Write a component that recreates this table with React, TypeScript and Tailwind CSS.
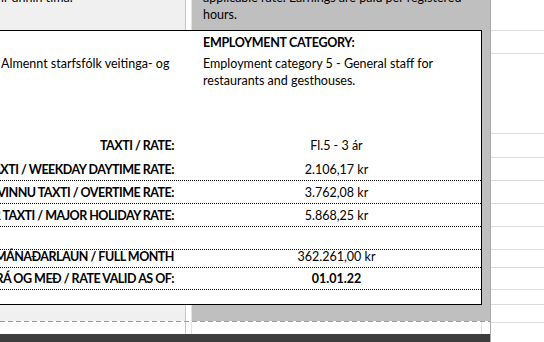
const rateRows = [
  { label: 'DAGVINNUTAXTI / WEEKDAY DAYTIME RATE:', value: '2.106,17 kr', h: 'h-[24px]' },
  { label: 'YFIRVINNU TAXTI / OVERTIME RATE:', value: '3.762,08 kr', h: 'h-[23px]' },
  { label: 'STÓRHÁTÍÐAR TAXTI / MAJOR HOLIDAY RATE:', value: '5.868,25 kr', h: 'h-[23px]' },
  { label: '', value: '', h: 'h-[23px]' },
  { label: 'MÁNAÐARLAUN / FULL MONTH', value: '362.261,00 kr', h: 'h-[18px]' },
  { label: 'GILDIR FRÁ OG MEÐ / RATE VALID AS OF:', value: '01.01.22', h: 'h-[22px]', bold: true },
];

const gridRows = ['h-[31px]', 'h-[23px]', 'h-[80px]', 'h-[24px]', 'h-[23px]', 'h-[23px]', 'h-[23px]', 'h-[23px]', 'h-[18px]', 'h-[22px]', 'h-[15px]', 'h-[18px]'];

export default function App() {
  return (
    <div className="flex h-[342px] w-[544px] overflow-hidden bg-white font-['Lato','Noto_Sans',sans-serif] text-[12.5px] leading-[17px] text-black">
      {/* sheet area */}
      <div className="flex w-[491px] flex-col border-r border-[#a9a9a9]">
        {/* row above the box */}
        <div className="flex h-[30px]">
          <div className="w-[186px] border-r border-[#c6c6c6] bg-[#f0f0f0] pl-px">
            <p className="-mt-[11px]">ir unnin tíma.</p>
          </div>
          <div className="w-[6px] border-r border-[#e2e2e2] bg-white" />
          <div className="flex-1 bg-[#bfbfbf] pl-[11px]">
            <p className="-mt-[11px] whitespace-nowrap">applicable rate. Earnings are paid per registered</p>
            <p>hours.</p>
          </div>
        </div>

        {/* bordered box */}
        <div className="flex h-[275px]">
          <div className="flex w-[482px] flex-col border-y border-r border-black bg-white">
            <div className="flex h-[22px] items-end pb-[2px]">
              <div className="w-[192px]" />
              <p className="pl-[11px] font-bold tracking-[-0.3px]">EMPLOYMENT CATEGORY:</p>
            </div>
            <div className="flex h-[80px] pt-[2px]">
              <p className="w-[192px] whitespace-nowrap pl-px">Almennt starfsfólk veitinga- og</p>
              <div className="pl-[11px]">
                <p>Employment category 5 - General staff for</p>
                <p>restaurants and gesthouses.</p>
              </div>
            </div>
            <div className="flex h-[24px] items-end pb-[3px]">
              <div className="flex w-[192px] justify-end pr-[18px] font-bold tracking-[-0.5px]">
                <span className="whitespace-nowrap">TAXTI / RATE:</span>
              </div>
              <p className="flex-1 text-center">Fl.5 - 3 ár</p>
            </div>
            {rateRows.map((row, i) => (
              <div key={i} className={`flex items-end border-b border-dotted border-black pb-[2px] ${row.h}`}>
                <div className="flex w-[192px] shrink-0 justify-end pr-[18px] font-bold tracking-[-0.5px]">
                  <span className="shrink-0 whitespace-nowrap">{row.label}</span>
                </div>
                <p className={`flex-1 text-center ${row.bold ? 'font-bold' : ''}`}>{row.value}</p>
              </div>
            ))}
            <div className="flex-1" />
          </div>
          <div className="flex-1 bg-[#bfbfbf]" />
        </div>

        {/* row below the box */}
        <div className="flex h-[16px]">
          <div className="w-[186px] border-r border-[#c6c6c6] bg-[#f0f0f0]" />
          <div className="w-[6px] border-r border-[#e2e2e2] bg-white" />
          <div className="flex-1 bg-[#bfbfbf]" />
        </div>
        <div className="h-px bg-[repeating-linear-gradient(90deg,#999999_0_5px,transparent_5px_8px)]" />
        <div className="flex h-[12px]">
          <div className="w-[186px] border-r border-[#c6c6c6]" />
          <div className="w-[6px] border-r border-[#e2e2e2]" />
          <div className="w-[290px] border-r border-[#e2e2e2]" />
        </div>
        <div className="h-[8px] bg-[#3d3d3d]" />
      </div>

      {/* empty cells to the right */}
      <div className="flex flex-1 flex-col">
        {gridRows.map((h, i) => (
          <div key={i} className={`border-b border-[#dcdcdc] ${h}`} />
        ))}
      </div>
    </div>
  );
}
